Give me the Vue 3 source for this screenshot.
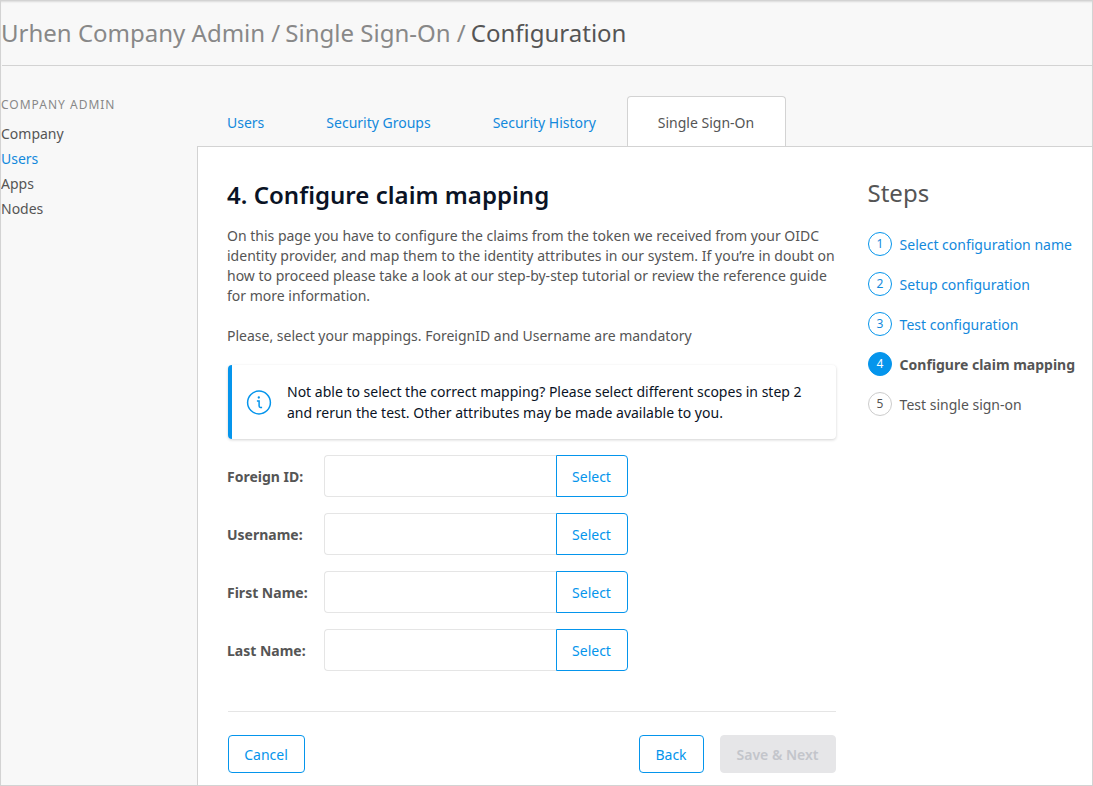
<script setup>
const navItems = [
  { label: 'Company' },
  { label: 'Users', active: true },
  { label: 'Apps' },
  { label: 'Nodes' },
]
const tabs = [
  { label: 'Users' },
  { label: 'Security Groups' },
  { label: 'Security History' },
  { label: 'Single Sign-On', active: true },
]
const fields = ['Foreign ID:', 'Username:', 'First Name:', 'Last Name:']
const steps = [
  { label: 'Select configuration name', state: 'done' },
  { label: 'Setup configuration', state: 'done' },
  { label: 'Test configuration', state: 'done' },
  { label: 'Configure claim mapping', state: 'current' },
  { label: 'Test single sign-on', state: 'todo' },
]
</script>

<template>
  <div class="page">
    <header class="header">
      <h1 class="crumbs">Urhen Company Admin <span class="slash">/</span> Single Sign-On <span class="slash">/</span> <span class="here">Configuration</span></h1>
    </header>
    <div class="body">
      <nav class="sidebar">
        <div class="sidebar-title">COMPANY ADMIN</div>
        <a v-for="n in navItems" :key="n.label" class="nav-item" :class="{ active: n.active }">{{ n.label }}</a>
      </nav>
      <main class="main">
        <div class="tabs">
          <a v-for="t in tabs" :key="t.label" class="tab" :class="{ active: t.active }">{{ t.label }}</a>
        </div>
        <div class="panel">
          <section class="content">
            <h2 class="heading">4. Configure claim mapping</h2>
            <p class="text">
              On this page you have to configure the claims from the token we received from your OIDC<br />
              <span class="wide">identity provider, and map them to the identity attributes in our system. If you’re in doubt on</span><br />
              how to proceed please take a look at our step-by-step tutorial or review the reference guide<br />
              for more information.
            </p>
            <p class="text second">Please, select your mappings. ForeignID and Username are mandatory</p>
            <div class="notice">
              <svg class="info" width="26" height="26" viewBox="0 0 26 26" fill="none" stroke="#0595ec">
                <circle cx="13" cy="13.5" r="11.4" stroke-width="1.5" />
                <path d="M10.9 11.9h2.2v5.2q0 1.3 1.3 1.3h1.7" stroke-width="1.5" />
                <circle cx="12.8" cy="8.5" r="1.15" fill="#0595ec" stroke="none" />
              </svg>
              <p class="notice-text">
                Not able to select the correct mapping? Please select different scopes in step 2<br />
                and rerun the test. Other attributes may be made available to you.
              </p>
            </div>
            <form class="form" @submit.prevent>
              <div v-for="f in fields" :key="f" class="row">
                <label class="label">{{ f }}</label>
                <input class="input" type="text" :aria-label="f" />
                <button class="btn select" type="button">Select</button>
              </div>
            </form>
            <div class="actions">
              <button class="btn cancel" type="button">Cancel</button>
              <span class="spacer"></span>
              <button class="btn back" type="button">Back</button>
              <button class="btn disabled" type="button" disabled>Save &amp; Next</button>
            </div>
          </section>
          <aside class="steps">
            <h3 class="steps-title">Steps</h3>
            <div v-for="(s, i) in steps" :key="s.label" class="step" :class="s.state">
              <span class="num">{{ i + 1 }}</span>
              <span class="step-label">{{ s.label }}</span>
            </div>
          </aside>
        </div>
      </main>
    </div>
  </div>
</template>

<style>
body {
  overflow: hidden;
}
</style>

<style scoped>
.page {
  box-sizing: border-box;
  width: 1093px;
  height: 786px;
  border: 1px solid #d3d3d3;
  background: #f8f8f8;
  box-shadow: inset 0 2px 2px -1px rgba(0, 0, 0, 0.12);
  font-family: 'Noto Sans', sans-serif;
  font-size: 14px;
  color: #555;
  display: flex;
  flex-direction: column;
  overflow: hidden;
}
.page *,
.page *::before {
  box-sizing: border-box;
}
h1, h2, h3, p {
  margin: 0;
}
.header {
  height: 65px;
  flex: none;
  margin-left: 1px;
  border-bottom: 1px solid #d3d3d3;
}
.crumbs {
  margin: 15px 0 0 -1px;
  font-size: 24px;
  line-height: 34px;
  font-weight: 400;
  color: #888;
  white-space: pre;
}
.slash {
  margin-right: -1.2px;
}
.here {
  color: #555;
}
.body {
  flex: 1;
  display: flex;
  min-height: 0;
}
.sidebar {
  width: 196px;
  flex: none;
  padding-top: 29px;
  display: flex;
  flex-direction: column;
}
.sidebar-title {
  font-size: 12px;
  line-height: 20px;
  letter-spacing: 1px;
  color: #888;
  margin-bottom: 6px;
}
.nav-item {
  line-height: 25px;
}
.nav-item.active,
.tab {
  color: #1389dc;
}
.main {
  flex: 1;
  min-width: 0;
  padding-top: 30px;
  display: flex;
  flex-direction: column;
}
.tabs {
  display: flex;
  flex: none;
  height: 50px;
  margin-left: -1px;
}
.tab {
  padding: 0 30px;
  line-height: 52px;
  border: 1px solid transparent;
  border-bottom: 0;
  white-space: nowrap;
}
.tab.active {
  padding: 0 31px 0 29.8px;
  color: #555;
  background: #fff;
  border-color: #d3d3d3;
  border-radius: 4px 4px 0 0;
}
.panel {
  flex: 1;
  display: flex;
  background: #fff;
  border: 1px solid #d3d3d3;
  border-width: 1px 0 0 1px;
}
.content {
  width: 610px;
  margin-left: 29px;
  flex: none;
}
.heading {
  margin-top: 31px;
  font-size: 24px;
  line-height: 34px;
  font-weight: 600;
  letter-spacing: 0.03px;
  color: #0a1325;
}
.text {
  margin-top: 14px;
  line-height: 20px;
  white-space: nowrap;
}
.text.second {
  margin-top: 20px;
}
.wide {
  letter-spacing: 0.01px;
}
.notice {
  margin: 19px 0 0 1px;
  width: 608px;
  height: 74px;
  border-left: 4px solid #0595ec;
  border-radius: 4px;
  box-shadow: 0 1px 3px rgba(0, 0, 0, 0.18);
  display: flex;
  align-items: center;
}
.info {
  flex: none;
  margin-left: 14px;
}
.notice-text {
  margin-left: 15px;
  line-height: 21px;
  color: #0a1325;
  white-space: nowrap;
}
.form {
  margin-top: 16px;
  display: flex;
  flex-direction: column;
  gap: 16px;
}
.row {
  display: flex;
  height: 42px;
}
.label {
  width: 97px;
  line-height: 43px;
  font-weight: 700;
}
.input {
  width: 232px;
  padding: 0 12px;
  border: 1px solid #e5e5e5;
  border-right: 0;
  border-radius: 4px 0 0 4px;
  background: #fff;
  font: inherit;
}
.btn {
  height: 38px;
  padding: 1px 0 0;
  border: 1px solid #0595ec;
  border-radius: 4px;
  background: #fff;
  color: #0595ec;
  font: inherit;
}
.btn.select {
  width: 72px;
  height: 42px;
  padding-right: 1px;
  border-radius: 0 4px 4px 0;
}
.btn.cancel {
  width: 77px;
  padding-right: 1px;
}
.btn.back {
  width: 65px;
  padding-right: 1px;
}
.btn.disabled {
  width: 116px;
  margin-left: 16px;
  padding-right: 1px;
  border-color: #e6e6e8;
  background: #e6e6e8;
  color: #c3c5cb;
  font-weight: 600;
}
.actions {
  margin: 40px 0 0 1px;
  width: 608px;
  padding-top: 23px;
  border-top: 1px solid #e5e5e5;
  display: flex;
}
.spacer {
  flex: 1;
}
.steps {
  margin-left: 31px;
}
.steps-title {
  margin: 29px 0 14px -0.5px;
  font-size: 24px;
  line-height: 34px;
  font-weight: 400;
}
.step {
  height: 40px;
  display: flex;
  align-items: center;
  white-space: nowrap;
}
.num {
  width: 24px;
  height: 24px;
  border: 1px solid #ccc;
  border-radius: 50%;
  font-size: 12px;
  line-height: 22px;
  text-align: center;
}
.step-label {
  margin: 1px 0 0 7.6px;
}
.done {
  color: #1389dc;
}
.done .num {
  border-color: #0595ec;
}
.current {
  font-weight: 700;
}
.current .num {
  border-color: #0595ec;
  background: #0595ec;
  color: #fff;
  font-weight: 400;
}
</style>
